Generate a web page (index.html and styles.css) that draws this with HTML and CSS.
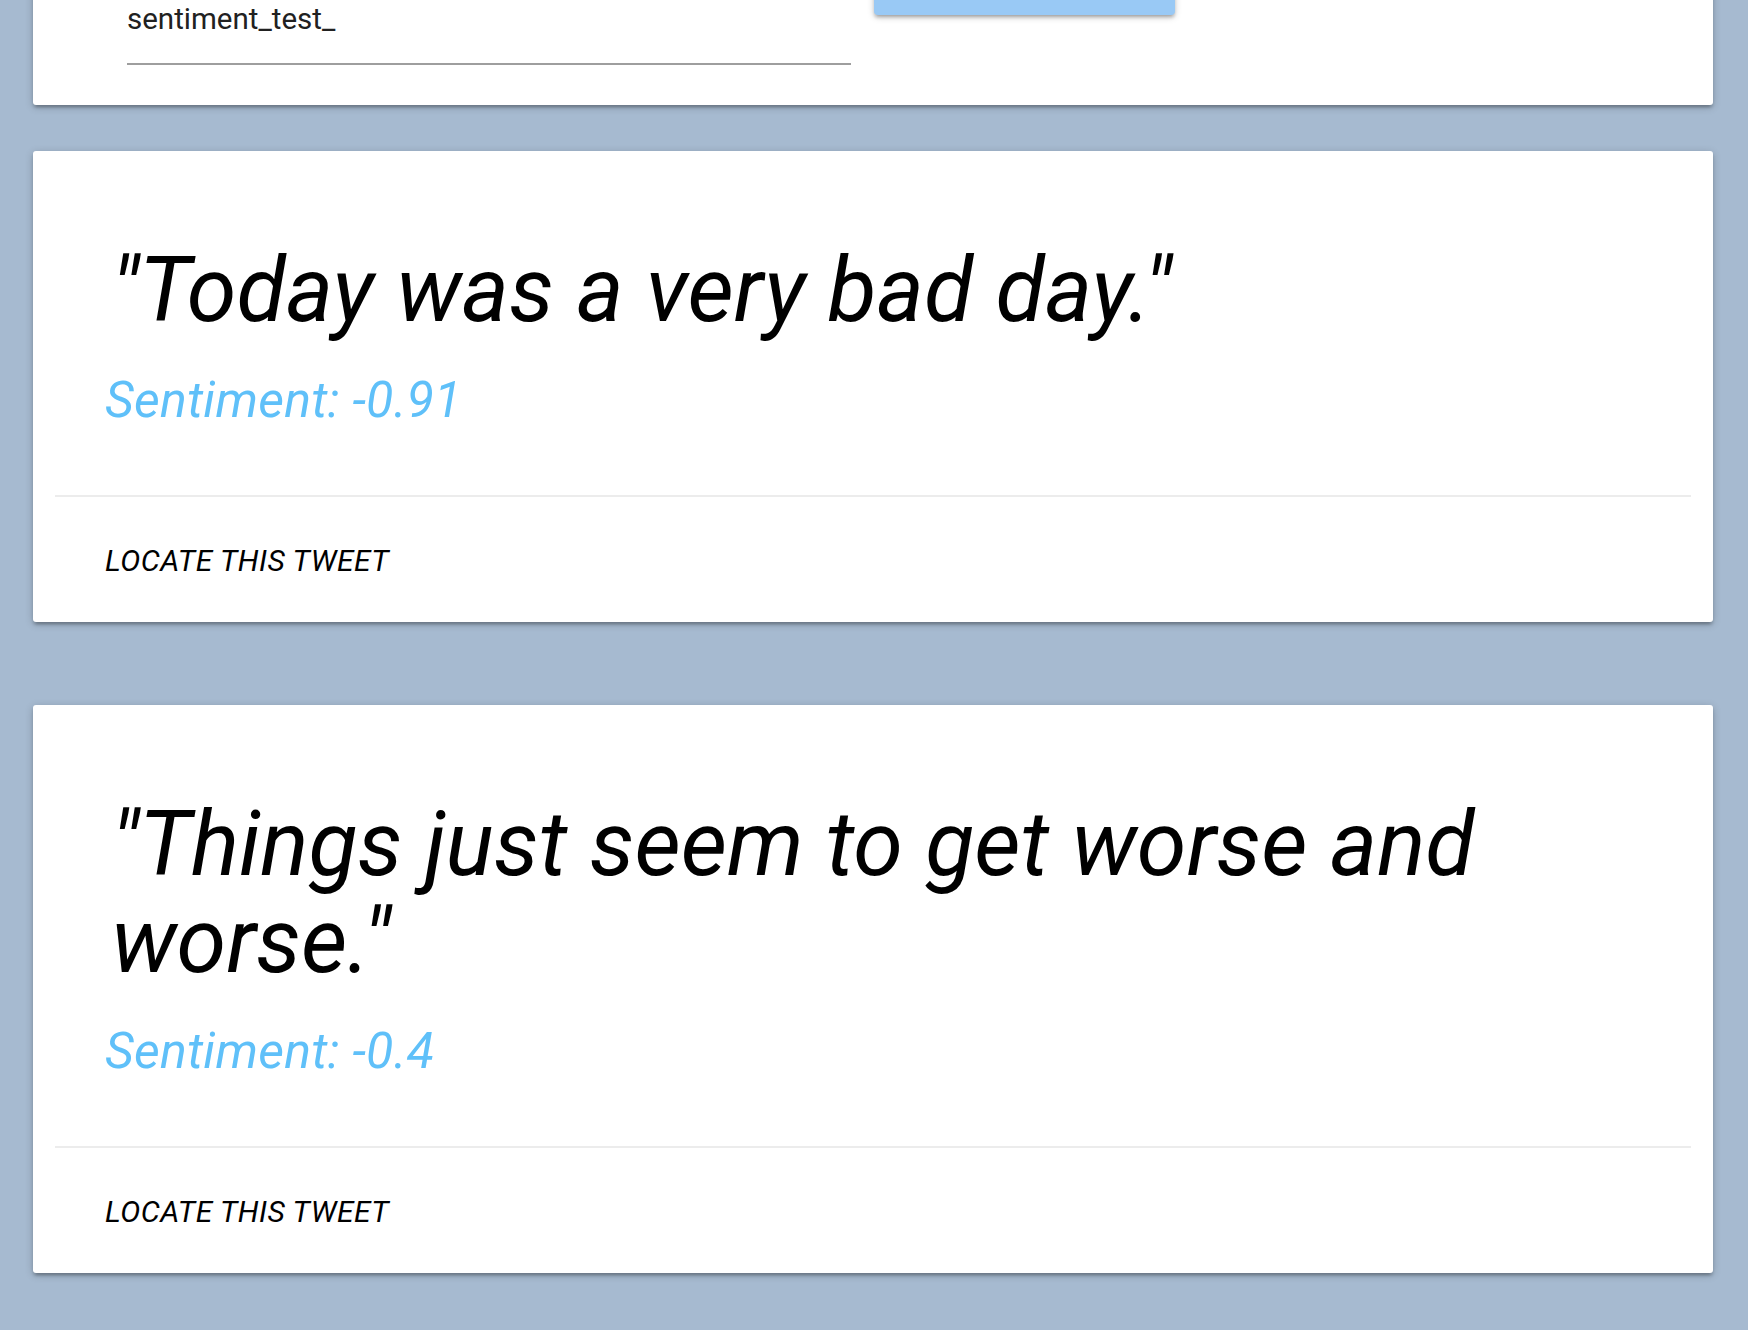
FILE: index.html
```html
<!DOCTYPE html>
<html lang="en">
<head>
<meta charset="utf-8">
<title>Tweet sentiment</title>
<link rel="stylesheet" href="styles.css">
</head>
<body>
<main class="page">
  <section class="card form-card">
    <div class="field">
      <span class="field-text">sentiment_test_</span>
    </div>
    <button class="btn" type="button"></button>
  </section>

  <section class="card tweet-card first">
    <div class="card-content">
      <h2 class="quote">"Today was a very bad day."</h2>
      <p class="sentiment">Sentiment: -0.91</p>
    </div>
    <div class="card-action">
      <a class="action-link" href="#">LOCATE THIS TWEET</a>
    </div>
  </section>

  <section class="card tweet-card second">
    <div class="card-content">
      <h2 class="quote">"Things just seem to get worse and worse."</h2>
      <p class="sentiment">Sentiment: -0.4</p>
    </div>
    <div class="card-action">
      <a class="action-link" href="#">LOCATE THIS TWEET</a>
    </div>
  </section>
</main>
</body>
</html>
```

FILE: styles.css
```css
html, body {
  margin: 0;
  padding: 0;
}

body {
  background: #a6bad0;
  font-family: Roboto, "Liberation Sans", Arial, sans-serif;
  height: 1330px;
  overflow: hidden;
}

.page {
  padding: 0 35px 0 33px;
}

.card {
  background: #ffffff;
  border-radius: 3px;
  box-shadow: 0 3px 3px 0 rgba(0, 0, 0, 0.14),
              0 5px 2px -3px rgba(0, 0, 0, 0.12),
              0 2px 8px 0 rgba(0, 0, 0, 0.2);
}

/* top form card (page is scrolled, its top is cut) */
.form-card {
  margin-top: -60px;
  height: 165px;
  box-sizing: border-box;
  padding-left: 94px;
  display: flex;
  align-items: flex-start;
  gap: 23px;
}

.field {
  width: 724px;
  margin-top: 64px;
  height: 59px;
  border-bottom: 2px solid #9e9e9e;
}

.field-text {
  display: block;
  font-family: Roboto, sans-serif;
  font-size: 29.5px;
  line-height: 30px;
  color: #212121;
}

.btn {
  width: 301px;
  height: 60px;
  margin-top: 15px;
  border: none;
  border-radius: 4px;
  background: #99c9f5;
  box-shadow: 0 3px 3px 0 rgba(0, 0, 0, 0.14),
              0 4px 2px -3px rgba(0, 0, 0, 0.12),
              0 2px 7px 0 rgba(0, 0, 0, 0.2);
}

.tweet-card {
  padding: 0 22px;
}

.tweet-card.first {
  margin-top: 46px;
}

.tweet-card.second {
  margin-top: 83px;
}

.card-content {
  padding: 91px 48px 69px 50px;
}

.quote {
  margin: 0;
  padding-left: 6px;
  font-family: Roboto, sans-serif;
  font-style: italic;
  font-weight: 400;
  font-size: 90px;
  line-height: 97px;
  color: #000000;
}

.sentiment {
  margin: 35px 0 0 0;
  font-family: Roboto, sans-serif;
  font-style: italic;
  font-size: 50px;
  line-height: 52px;
  letter-spacing: 0.3px;
  color: #5fc0f9;
}

.card-action {
  border-top: 2px solid #ececec;
  padding: 46px 48px 43px 50px;
}

.action-link {
  display: block;
  font-family: Roboto, sans-serif;
  font-style: italic;
  font-size: 30px;
  line-height: 36px;
  letter-spacing: 0.5px;
  color: #000000;
  text-decoration: none;
}
```
